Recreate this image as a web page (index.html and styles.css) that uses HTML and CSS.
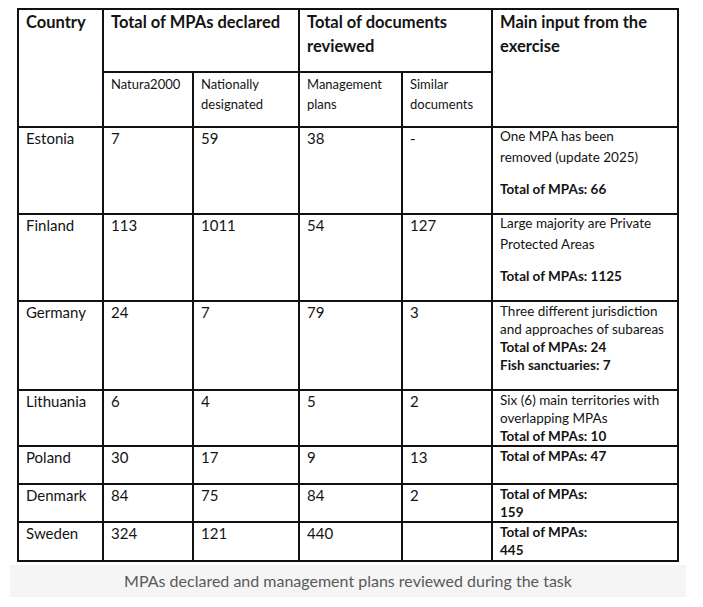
FILE: index.html
```html
<!DOCTYPE html>
<html lang="en">
<head>
<meta charset="utf-8">
<title>MPAs declared and management plans reviewed</title>
<link rel="stylesheet" href="styles.css">
</head>
<body>
<figure class="figure">
  <table class="mpa-table">
    <colgroup>
      <col class="c-country">
      <col class="c-natura">
      <col class="c-national">
      <col class="c-plans">
      <col class="c-similar">
      <col class="c-input">
    </colgroup>
    <thead>
      <tr class="r-head1">
        <th rowspan="2">Country</th>
        <th colspan="2">Total of MPAs declared</th>
        <th colspan="2">Total of documents reviewed</th>
        <th rowspan="2">Main input from the exercise</th>
      </tr>
      <tr class="r-head2">
        <td class="sub">Natura2000</td>
        <td class="sub">Nationally designated</td>
        <td class="sub">Management plans</td>
        <td class="sub">Similar documents</td>
      </tr>
    </thead>
    <tbody>
      <tr class="r-estonia">
        <td>Estonia</td><td>7</td><td>59</td><td>38</td><td>-</td>
        <td class="note"><p class="wide">One MPA has been<br>removed (update 2025)</p><p class="total gap">Total of MPAs: 66</p></td>
      </tr>
      <tr class="r-finland">
        <td>Finland</td><td>113</td><td>1011</td><td>54</td><td>127</td>
        <td class="note"><p class="wide">Large majority are Private<br>Protected Areas</p><p class="total gap">Total of MPAs: 1125</p></td>
      </tr>
      <tr class="r-germany">
        <td>Germany</td><td>24</td><td>7</td><td>79</td><td>3</td>
        <td class="note"><p>Three different jurisdiction<br>and approaches of subareas</p><p class="total">Total of MPAs: 24</p><p class="total">Fish sanctuaries: 7</p></td>
      </tr>
      <tr class="r-lithuania">
        <td>Lithuania</td><td>6</td><td>4</td><td>5</td><td>2</td>
        <td class="note"><p>Six (6) main territories with<br>overlapping MPAs</p><p class="total">Total of MPAs: 10</p></td>
      </tr>
      <tr class="r-poland">
        <td>Poland</td><td>30</td><td>17</td><td>9</td><td>13</td>
        <td class="note"><p class="total">Total of MPAs: 47</p></td>
      </tr>
      <tr class="r-denmark">
        <td>Denmark</td><td>84</td><td>75</td><td>84</td><td>2</td>
        <td class="note"><p class="total">Total of MPAs:<br>159</p></td>
      </tr>
      <tr class="r-sweden">
        <td>Sweden</td><td>324</td><td>121</td><td>440</td><td></td>
        <td class="note"><p class="total">Total of MPAs:<br>445</p></td>
      </tr>
    </tbody>
  </table>
  <figcaption class="caption">MPAs declared and management plans reviewed during the task</figcaption>
</figure>
</body>
</html>
```

FILE: styles.css
```css
html, body {
  background: #ffffff;
}

body {
  margin: 8px 0 0 10px;
  font-family: "Lato", "Liberation Sans", sans-serif;
  color: #141414;
}

.figure {
  margin: 0;
  width: 676px;
}

.mpa-table {
  margin-left: 7px;
  width: 662px;
  table-layout: fixed;
  border-collapse: collapse;
  border: 2px solid #111;
}

.c-country { width: 85px; }
.c-natura { width: 90px; }
.c-national { width: 106px; }
.c-plans { width: 103px; }
.c-similar { width: 90px; }
.c-input { width: 186px; }

.mpa-table th,
.mpa-table td {
  border: 2px solid #111;
  padding: 0 7px;
  vertical-align: top;
  text-align: left;
  font-size: 15px;
  line-height: 20px;
}

.mpa-table th {
  font-size: 16.5px;
  line-height: 24px;
  font-weight: 700;
}

.mpa-table td.sub {
  font-size: 13px;
  line-height: 20px;
  padding-top: 1px;
}

.r-head1 { height: 63px; }
.r-head2 { height: 55px; }
.r-estonia { height: 87px; }
.r-finland { height: 87px; }
.r-germany { height: 89px; }
.r-lithuania { height: 55px; }
.r-poland { height: 38px; }
.r-denmark { height: 38px; }
.r-sweden { height: 39px; }

.mpa-table td.note {
  font-size: 13.5px;
  line-height: 18px;
  white-space: nowrap;
}

.note p {
  margin: 0;
}

.note p.wide {
  line-height: 21px;
  margin-top: -2px;
}

.note p.total {
  font-weight: 700;
}

.note p.gap {
  margin-top: 12px;
}

.caption {
  margin-top: 3px;
  height: 32px;
  background: #f5f5f5;
  color: #595959;
  font-size: 16px;
  line-height: 32px;
  text-align: center;
}
```
